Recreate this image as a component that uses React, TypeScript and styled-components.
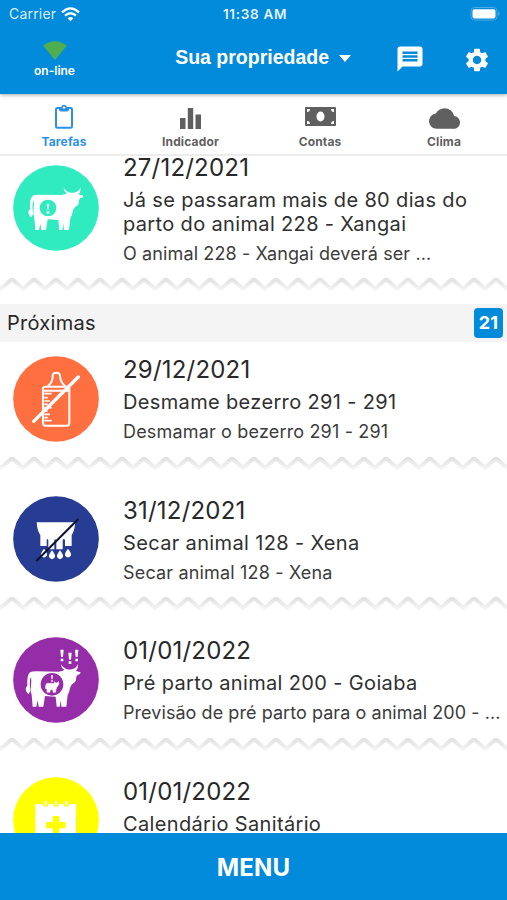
import React from "react";
import styled, { createGlobalStyle } from "styled-components";
import { MdCloud, MdMessage, MdSettings } from "react-icons/md";

const GlobalStyle = createGlobalStyle`
  * { box-sizing: border-box; }
  body { margin: 0; background: #fff; }
`;

const Screen = styled.div`
  width: 507px;
  height: 900px;
  display: flex;
  flex-direction: column;
  overflow: hidden;
  background: #fff;
  color: #282828;
  font-family: Inter, "Liberation Sans", sans-serif;
`;

const Header = styled.header`
  flex: none;
  height: 94px;
  background: #028adb;
  color: #fff;
  box-shadow: 0 1px 4px rgba(0, 0, 0, 0.35);
  z-index: 1;
`;

const StatusBar = styled.div`
  height: 28px;
  display: grid;
  grid-template-columns: 1fr auto 1fr;
  align-items: center;
  padding: 0 6px 0 9px;
  line-height: 28px;
`;

const Carrier = styled.div`
  display: flex;
  align-items: center;
  gap: 5px;
  font-size: 14px;
  letter-spacing: 0.2px;
  color: #d9eefa;
`;

const Clock = styled.div`
  font-size: 13.5px;
  font-weight: 600;
  letter-spacing: 0.7px;
  color: #e3f2fc;
`;

const BatteryIcon = styled.svg`
  justify-self: end;
`;

const Toolbar = styled.div`
  height: 66px;
  display: grid;
  grid-template-columns: 109px 1fr 135px;
`;

const Connection = styled.div`
  display: flex;
  flex-direction: column;
  align-items: center;
  padding-top: 13px;
  font-size: 12px;
  font-weight: 600;
  line-height: 16px;
  gap: 3px;
`;

const Property = styled.div`
  display: flex;
  justify-content: flex-end;
  align-items: flex-start;
  gap: 10px;
  padding: 17px 21px 0 0;
  font: bold 19.5px/24px "Liberation Sans", Arial, sans-serif;
  white-space: nowrap;
`;

const Caret = styled.svg`
  margin-top: 10px;
`;

const Actions = styled.div`
  display: flex;
  align-items: flex-start;
  gap: 38px;
  padding: 16px 0 0 23px;
`;

const SettingsIcon = styled(MdSettings)`
  margin-top: 2px;
`;

const Tabs = styled.nav`
  flex: none;
  height: 62px;
  display: flex;
  padding: 2px 0 0;
  border-bottom: 2px solid #ececec;
  background: #fff;
`;

const Tab = styled.div<{ $active?: boolean; $width: number }>`
  width: ${(p) => p.$width}px;
  display: flex;
  flex-direction: column;
  align-items: center;
  color: ${(p) => (p.$active ? "#2b90ea" : "#5f5f5f")};
  font-size: 12px;
  font-weight: 700;
  line-height: 16px;
  letter-spacing: 0.15px;
`;

const TabIcon = styled.div<{ $drop?: number }>`
  height: 38px;
  padding-top: ${(p) => p.$drop ?? 0}px;
  display: flex;
  align-items: center;
  justify-content: center;
`;

const List = styled.main`
  flex: 1;
  min-height: 0;
  display: flex;
  flex-direction: column;
  overflow: hidden;
`;

const Scrolled = styled.div`
  flex: none;
  margin-top: -17px;
`;

const Task = styled.article<{ $height: number }>`
  height: ${(p) => p.$height}px;
  display: flex;
  flex-direction: column;
`;

const TaskBody = styled.div`
  flex: 1;
  display: grid;
  grid-template-columns: 123px 1fr;
  align-items: center;
`;

const Badge = styled.svg`
  width: 86px;
  height: 86px;
  margin: 0 0 1.4px 13px;
`;

const TaskText = styled.div`
  min-height: 88px;
  display: flex;
  flex-direction: column;
  white-space: nowrap;
`;

const DateLine = styled.div`
  font-size: 24px;
  line-height: 30px;
  letter-spacing: 0.2px;
`;

const Title = styled.div`
  margin-top: 5px;
  font-size: 20px;
  line-height: 24px;
  letter-spacing: 0.35px;
  color: #303030;
  white-space: pre-line;
`;

const Summary = styled.div<{ $tracking?: number }>`
  margin-top: 7px;
  font-size: 18px;
  line-height: 22px;
  letter-spacing: ${(p) => p.$tracking ?? 0.17}px;
  color: #3c3c3c;
`;

const Divider = styled.svg`
  flex: none;
  display: block;
`;

const SectionHeader = styled.div`
  height: 38px;
  display: flex;
  align-items: center;
  justify-content: space-between;
  padding: 0 4px 0 7px;
  background: #f4f4f4;
  font-size: 20px;
  letter-spacing: 0.27px;
`;

const Count = styled.div`
  width: 29px;
  height: 30px;
  border-radius: 4px;
  background: #028adb;
  color: #fff;
  font-size: 18px;
  font-weight: 700;
  line-height: 30px;
  text-align: center;
`;

const MenuButton = styled.button`
  flex: none;
  height: 67px;
  border: 0;
  background: #028adb;
  color: #fff;
  font: 700 24px/67px Inter, sans-serif;
  letter-spacing: 0.2px;
`;

const Zigzag = ({ id }: { id: string }) => (
  <Divider width="507" height="26" viewBox="0 0 507 26">
    <defs>
      <linearGradient id={id} x1="0" y1="0" x2="0" y2="1">
        <stop offset="0" stopColor="#e1e1e1" />
        <stop offset="0.6" stopColor="#ebebeb" />
        <stop offset="1" stopColor="#f4f4f4" />
      </linearGradient>
      <filter id={`${id}-soft`} x="-5%" y="-50%" width="110%" height="200%">
        <feGaussianBlur stdDeviation="0.7" />
      </filter>
    </defs>
    <path
      d={Array.from({ length: 25 }, (_, i) => `${i ? "L" : "M"}${i * 22 - 10} 1L${i * 22 + 1} 11`).join("")}
      fill="none"
      stroke={`url(#${id})`}
      strokeWidth="3.8"
      strokeLinejoin="round"
      filter={`url(#${id}-soft)`}
    />
  </Divider>
);

const cowBody =
  "M98 124Q104 121 116 121L184 122Q196 120 202 116Q192 114 191 100Q197 111 207 114Q216 117 226 114Q236 112 242 99Q243 112 236 120L250 124Q249 132 241 131Q236 135 236 147Q235 154 226 158Q220 161 218 172Q216 184 211 192L207 227H192L190 208L187 227H178L175 197L143 195L138 227H124L121 208L117 227H106L103 192Q98 181 101 165Q103 150 101 137Q96 148 98 168Q101 180 94 189Q87 186 85 174Q86 167 90 164Q88 133 98 124Z";

const Cow = () => (
  <g transform="translate(-39 -32)">
    <path d={cowBody} fill="#fff" />
    <circle cx="144" cy="161" r="25" fill="#31ebc0" />
    <path d="M140 148h8l-2 18h-4zM140 171h8v7h-8z" fill="#e8fff8" />
  </g>
);

const PregnantCow = () => (
  <g transform="translate(-39 -49)">
    <g transform="translate(-8 31)">
      <path d={cowBody} fill="#fff" />
    </g>
    <circle cx="156" cy="191" r="34" fill="#962da8" />
    <g transform="translate(115 158) scale(.25)">
      <path d={cowBody} fill="#fff" stroke="#fff" strokeWidth="8" />
    </g>
    <path d="M153 163h6l-1 13h-4zM153 179h6v4h-6z" fill="#f2def5" />
    <path
      d="M181 87h10l-2 22h-6zM182 114h8v8h-8zM205 96h10l-2 21h-6zM206 122h8v8h-8zM225 87h10l-2 22h-6zM226 114h8v8h-8z"
      fill="#fff"
    />
  </g>
);

const Bottle = () => (
  <g transform="translate(-39 -49)" fill="none" stroke="#fff" strokeWidth="6" strokeLinejoin="round" strokeLinecap="round">
    <path d="M144 139Q159 127 158 107Q159 99 169 99Q179 99 180 107Q180 127 195 139" />
    <path d="M136 141H203Q210 141 208 154V250Q208 258 200 258H137Q129 258 129 250V154Q126 141 136 141ZM129 153H207" />
    <path d="M133 162h22M133 174h10M133 184h17M133 194h10M133 204h22M133 214h10M133 224h17M133 234h10M133 243h22" strokeWidth="5" strokeLinecap="butt" />
    <path d="M101 245L235 112" strokeWidth="10" />
  </g>
);

const Udder = () => (
  <g transform="translate(-39 -48)">
    <path
      d="M110 127H226Q223 155 215 165V198H195V180Q191 174 188 180V208H169V182Q165 174 163 182V208H145V180Q141 174 140 180V198H121V165Q112 155 110 127Z"
      fill="#fff"
    />
    {[[132, 206], [156, 211], [180, 211], [204, 206]].map(([x, y]) => (
      <path key={x} d={`M${x} ${y}Q${x + 11} ${y + 14} ${x + 9} ${y + 20}Q${x} ${y + 33} ${x - 9} ${y + 20}Q${x - 11} ${y + 14} ${x} ${y}Z`} fill="#fff" />
    ))}
    <path d="M109 243L235 117" stroke="#0d1230" strokeWidth="6" />
  </g>
);

const Calendar = () => (
  <g transform="translate(-39 -48)">
    <path d="M106 129H228V250H106Z" fill="#fff" />
    <g fill="#ff0">
      <circle cx="137" cy="129" r="8" />
      <circle cx="168" cy="129" r="8" />
      <circle cx="199" cy="129" r="8" />
      <path d="M158 165H178V183H197V202H178V221H158V202H138V183H158Z" />
    </g>
    <path d="M137 122v8M168 122v8M199 122v8" stroke="#fff" strokeWidth="6" strokeLinecap="round" />
  </g>
);

interface TaskData {
  date: string;
  title: string;
  summary?: string;
  tracking?: number;
  color: string;
  height: number;
  icon: React.ReactNode;
}

const overdue: TaskData = {
  date: "27/12/2021",
  title: "Já se passaram mais de 80 dias do\nparto do animal 228 - Xangai",
  summary: "O animal 228 - Xangai deverá ser ...",
  tracking: 0.12,
  color: "#31ebc0",
  height: 165,
  icon: <Cow />,
};

const upcoming: TaskData[] = [
  { date: "29/12/2021", title: "Desmame bezerro 291 - 291", summary: "Desmamar o bezerro 291 - 291", color: "#ff6f40", height: 140.5, icon: <Bottle /> },
  { date: "31/12/2021", title: "Secar animal 128 - Xena", summary: "Secar animal 128 - Xena", color: "#273d93", height: 140.5, icon: <Udder /> },
  { date: "01/01/2022", title: "Pré parto animal 200 - Goiaba", summary: "Previsão de pré parto para o animal 200 - ...", tracking: 0.06, color: "#962da8", height: 140.5, icon: <PregnantCow /> },
  { date: "01/01/2022", title: "Calendário Sanitário", color: "#ff0", height: 140.5, icon: <Calendar /> },
];

const TaskItem = ({ task, id }: { task: TaskData; id: string }) => (
  <Task $height={task.height}>
    <TaskBody>
      <Badge viewBox="0 0 258 258">
        <circle cx="129" cy="129" r="128.5" fill={task.color} />
        {task.icon}
      </Badge>
      <TaskText>
        <DateLine>{task.date}</DateLine>
        <Title>{task.title}</Title>
        {task.summary && <Summary $tracking={task.tracking}>{task.summary}</Summary>}
      </TaskText>
    </TaskBody>
    <Zigzag id={id} />
  </Task>
);

export default function App() {
  return (
    <Screen>
      <GlobalStyle />
      <Header>
        <StatusBar>
          <Carrier>
            Carrier
            <svg width="19" height="15" viewBox="0 0 19 15" fill="none" stroke="#fff" strokeWidth="2.3">
              <path d="M1 5.3Q9.5-2.6 18 5.3M4 8.7Q9.5 3.7 15 8.7" />
              <path d="M6.6 11.2Q9.5 8.7 12.4 11.2L9.5 14.2Z" fill="#fff" stroke="none" />
            </svg>
          </Carrier>
          <Clock>11:38 AM</Clock>
          <BatteryIcon width="31" height="15" viewBox="0 0 31 15">
            <rect x="1" y="0.5" width="26" height="12.5" rx="3.5" fill="none" stroke="#4dabe3" />
            <rect x="2.5" y="2.2" width="23" height="9.2" rx="1.8" fill="#fff" />
            <path d="M28.5 4.5q2 2.2 0 4.4z" fill="#73bde9" />
          </BatteryIcon>
        </StatusBar>
        <Toolbar>
          <Connection>
            <svg width="24" height="19" viewBox="0 0 24 19">
              <path d="M0 4.5Q12-4 24 4.5L12 19Z" fill="#4eae50" />
            </svg>
            on-line
          </Connection>
          <Property>
            Sua propriedade
            <Caret width="12" height="7" viewBox="0 0 12 7">
              <path d="M0 0H12L6 7Z" fill="#fff" />
            </Caret>
          </Property>
          <Actions>
            <MdMessage size={30} />
            <SettingsIcon size={28} />
          </Actions>
        </Toolbar>
      </Header>
      <Tabs>
        <Tab $active $width={128}>
          <TabIcon $drop={2}>
            <svg width="20" height="25" viewBox="0 0 20 25">
              <rect x="2" y="4" width="16" height="19.8" rx="1.5" fill="none" stroke="currentColor" strokeWidth="2" />
              <path d="M5 3H7.2A2.9 2.9 0 0 1 12.8 3H15V5.5Q15 7.5 13 7.5H7Q5 7.5 5 5.5Z" fill="currentColor" />
              <circle cx="10" cy="3.6" r="1.2" fill="#fff" />
            </svg>
          </TabIcon>
          Tarefas
        </Tab>
        <Tab $width={125}>
          <TabIcon $drop={6}>
            <svg width="21" height="21" viewBox="0 0 21 21" fill="currentColor">
              <path d="M0 10H5.5V21H0zM7.8 0H13.2V21H7.8zM15.5 6.5H21V21H15.5z" />
            </svg>
          </TabIcon>
          Indicador
        </Tab>
        <Tab $width={134}>
          <TabIcon $drop={2}>
            <svg width="31" height="19" viewBox="0 0 31 19">
              <rect width="31" height="19" rx="1" fill="currentColor" />
              <ellipse cx="15.5" cy="9.5" rx="4" ry="5" fill="#fff" />
              <path d="M2 5V2H5Q5 5 2 5ZM26 2H29V5Q26 5 26 2ZM2 14Q5 14 5 17H2ZM29 14V17H26Q26 14 29 14Z" fill="#fff" />
            </svg>
          </TabIcon>
          Contas
        </Tab>
        <Tab $width={114}>
          <TabIcon $drop={6}>
            <MdCloud size={31} />
          </TabIcon>
          Clima
        </Tab>
      </Tabs>
      <List>
        <Scrolled>
          <TaskItem task={overdue} id="zigzag-overdue" />
          <SectionHeader>
            Próximas
            <Count>21</Count>
          </SectionHeader>
          {upcoming.map((task, i) => (
            <TaskItem key={i} task={task} id={`zigzag-${i}`} />
          ))}
        </Scrolled>
      </List>
      <MenuButton>MENU</MenuButton>
    </Screen>
  );
}
